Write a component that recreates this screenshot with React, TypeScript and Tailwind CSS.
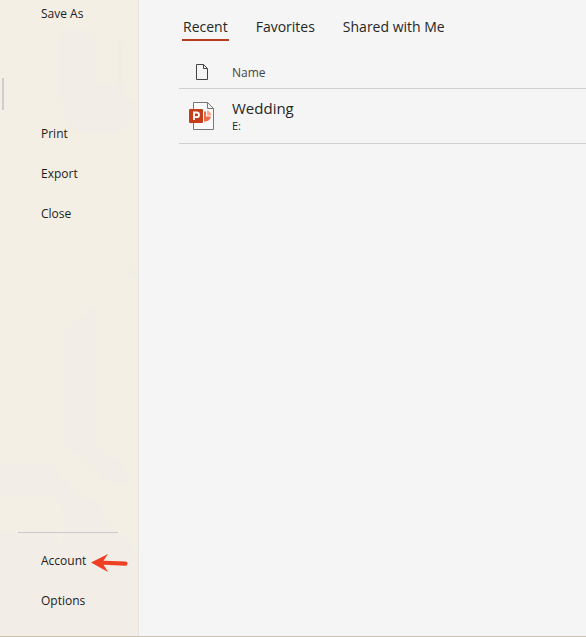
import clsx from "clsx";

const MENU = [
  { label: "Print", href: "#print" },
  { label: "Export", href: "#export" },
  { label: "Close", href: "#close" },
];

const FOOTER_MENU = [
  { label: "Account", href: "#account", pointed: true },
  { label: "Options", href: "#options", pointed: false },
];

const TABS = ["Recent", "Favorites", "Shared with Me"];

const FILES = [{ name: "Wedding", location: "E:" }];

function Backdrop() {
  return (
    <svg
      aria-hidden="true"
      className="pointer-events-none absolute inset-0 h-full w-full"
      viewBox="0 0 138 636"
      preserveAspectRatio="none"
      fill="#f2ede7"
    >
      <path d="M64 30H87Q92 34 97 43V84H123V101H136V112Q128 129 115 134H79Q65 128 63 101H59V43Q61 34 64 30Z" />
      <path d="M118 42H123V84H118Z" fill="#f2ede2" />
      <path d="M136 266V277H124Z" />
      <path d="M96 304V442Q101 458 116 460Q126 465 128 479L138 490V636H0V532H55L63 550V512Q60 497 49 496H0V463H50L62 480H101Q91 458 74 453Q64 447 64 438V331Q84 318 96 304Z" />
      <path d="M65 480Q72 496 88 498Q100 500 102 514Q104 526 116 531Q129 539 132 551H138V480H129Q118 489 108 480Z" fill="#f4efe4" />
    </svg>
  );
}

function PointerArrow() {
  return (
    <svg aria-hidden="true" className="mt-1 h-[18px] w-[37px]" viewBox="0 0 37 18" fill="#ef4024">
      <path d="M0 8.5L17 0L12.5 6.7L34.5 7.6A2 2 0 0 1 34.5 11.7L12.5 10.8L17 18Z" />
    </svg>
  );
}

function PageIcon() {
  return (
    <svg
      aria-hidden="true"
      className="h-4 w-3"
      viewBox="0 0 12 16"
      fill="none"
      stroke="#444"
      strokeWidth="1"
    >
      <path d="M0.5 0.5H7.5L11.5 4.5V15.5H0.5Z" />
      <path d="M7.5 0.5V4.5H11.5" />
    </svg>
  );
}

function PresentationIcon() {
  return (
    <svg aria-hidden="true" className="h-7 w-[25px]" viewBox="0 0 25 28">
      <path d="M4.5 0.5H18.5L24.5 6.5V27.5H4.5Z" fill="#fafafa" stroke="#777" />
      <path d="M18.5 0.5V6.5H24.5" fill="none" stroke="#777" />
      <path d="M15 9.5V19.5A6 6 0 0 0 22 14.5H17V9.5Z" fill="#ed6c47" />
      <path d="M18 8.5A5.5 5.5 0 0 1 22.5 13.5H18Z" fill="#ffa791" />
      <rect y="7" width="14" height="14" rx="1" fill="#c43e1c" />
      <path
        d="M5 18V10.5H7.6Q10 10.5 10 12.9Q10 15.2 7.5 15.2H5"
        fill="none"
        stroke="#fff"
        strokeWidth="1.8"
      />
    </svg>
  );
}

function Sidebar() {
  return (
    <aside className="relative flex w-[139px] shrink-0 flex-col border-r border-[#e7e4db] bg-[#f4efe4] text-xs text-[#1c1c1c]">
      <Backdrop />
      <nav aria-label="File" className="relative flex flex-1 flex-col justify-between pt-1 pb-[25px]">
        <ul className="space-y-5">
          <li className="h-5 pl-[41px] leading-5">
            <a href="#save-as">Save As</a>
          </li>
          <li className="h-5" />
          {/* marker of the current entry */}
          <li className="flex h-5 items-center pl-0.5">
            <span className="h-8 w-0.5 bg-[#cfcdd0]" />
          </li>
          {MENU.map((m) => (
            <li key={m.label} className="h-5 pl-[41px] leading-5">
              <a href={m.href}>{m.label}</a>
            </li>
          ))}
        </ul>

        <div>
          <hr className="mr-5 mb-[18px] ml-[18px] border-[#cacacf]" />
          <ul className="space-y-5">
            {FOOTER_MENU.map((m) => (
              <li key={m.label} className="flex h-5 items-center gap-[5px] pl-[41px] leading-5">
                <a href={m.href}>{m.label}</a>
                {m.pointed && <PointerArrow />}
              </li>
            ))}
          </ul>
        </div>
      </nav>
    </aside>
  );
}

export default function App() {
  return (
    <div className="flex min-h-screen border-b border-[#c9c1ad] bg-[#f5f5f5] font-['Open_Sans','Noto_Sans',sans-serif] text-[#262626]">
      <Sidebar />

      <main className="min-w-0 flex-1 pt-[15px] pl-10">
        <div role="tablist" className="flex gap-[26px] pl-[3px] text-sm leading-6">
          {TABS.map((tab, i) => (
            <button
              key={tab}
              type="button"
              role="tab"
              aria-selected={i === 0}
              className={clsx(
                "border-b-2 px-px whitespace-nowrap",
                i === 0 ? "border-[#b83b1d] font-medium" : "border-transparent"
              )}
            >
              {tab}
            </button>
          ))}
        </div>

        <table className="mt-[15px] w-full border-collapse text-left">
          <thead>
            <tr className="h-8 border-b border-[#d0d0d0]">
              <th className="w-[53px] pl-[17px]">
                <PageIcon />
              </th>
              <th className="pt-0.5 text-xs font-normal text-[#444]">Name</th>
            </tr>
          </thead>
          <tbody>
            {FILES.map((f) => (
              <tr key={f.name} className="h-[55px] border-b border-[#d0d0d0]">
                <td className="pl-[10px]">
                  <PresentationIcon />
                </td>
                <td>
                  <a href="#wedding" className="block text-[15px] leading-5">
                    {f.name}
                  </a>
                  <span className="block text-[11px] leading-4">{f.location}</span>
                </td>
              </tr>
            ))}
          </tbody>
        </table>
      </main>
    </div>
  );
}
